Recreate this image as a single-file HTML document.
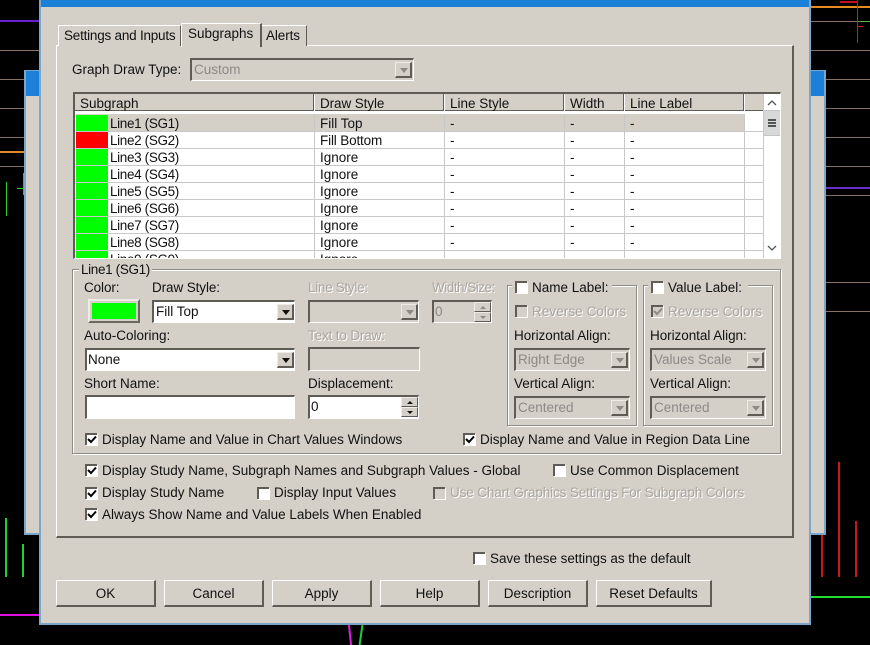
<!DOCTYPE html>
<html>
<head>
<meta charset="utf-8">
<style>
html,body{margin:0;padding:0;background:#000;}
#r{position:relative;width:870px;height:645px;overflow:hidden;background:#000;font-family:"Liberation Sans",sans-serif;font-size:13.5px;color:#111;}
#r div,#r span,#r svg{position:absolute;box-sizing:border-box;}
.t{line-height:16px;height:16px;white-space:nowrap;margin-top:1px;}
.n{letter-spacing:-.35px;}
.d{color:#aaa69e;text-shadow:1px 1px 0 #fff;}
.g{color:#8c8a86;}
.s{background:#d4d0c8;border-top:2px solid #5f5c56;border-left:2px solid #5f5c56;border-right:1px solid #fff;border-bottom:1px solid #fff;}
.w{background:#fff;}
.a{width:17px;height:16px;margin-top:1px;background:#d4d0c8;border-top:1px solid #eeece6;border-left:1px solid #eeece6;border-right:2px solid #5f5c56;border-bottom:2px solid #5f5c56;}
.a i{position:absolute;left:4px;top:5px;width:0;height:0;border-left:4px solid transparent;border-right:4px solid transparent;border-top:5px solid #111;}
.a.o i{border-top-color:#8c8a86;}
.sb{width:17px;height:10px;background:#d4d0c8;border-top:1px solid #eeece6;border-left:1px solid #eeece6;border-right:1px solid #5f5c56;border-bottom:1px solid #5f5c56;}
.sb i{position:absolute;left:5px;top:3px;width:0;height:0;border-left:3px solid transparent;border-right:3px solid transparent;}
.c{width:12px;height:12px;background:#fff;border-top:2px solid #5f5c56;border-left:2px solid #5f5c56;box-shadow:1px 1px 0 #fff;}
.c.o{background:#d4d0c8;}
.c svg{left:0;top:0;}
.b{top:580px;height:27px;background:#d4d0c8;border-top:1px solid #fff;border-left:1px solid #fff;border-right:2px solid #5f5c56;border-bottom:2px solid #5f5c56;text-align:center;line-height:26px;}
.l{background:#8a6f66;height:1px;}
.h{top:94px;width:1px;height:17px;background:#5f5c56;box-shadow:1px 0 0 #fff;}
.v{top:114px;width:1px;height:144px;background:#c8c8c8;}
.hl{left:76px;width:687px;height:1px;background:#c8c8c8;}
.sw{left:76px;width:32px;height:16px;background:#0f0;}
.gr{border:1px solid #8f8c84;box-shadow:1px 1px 0 #fff,inset 1px 1px 0 #fff;}
.tabt{border-top:1px solid #fff;border-left:1px solid #fff;border-right:1px solid #5f5c56;background:#d4d0c8;}
</style>
</head>
<body>
<div id="r">
<!-- chart -->
<div style="left:0;top:20px;width:40px;height:2px;background:#6a1fd0"></div>
<div class="l" style="left:0;top:50px;width:40px"></div>
<div class="l" style="left:0;top:79px;width:25px"></div>
<div class="l" style="left:0;top:108px;width:25px"></div>
<div class="l" style="left:0;top:137px;width:25px"></div>
<div style="left:0;top:151px;width:25px;height:2px;background:#e08a30"></div>
<div class="l" style="left:0;top:166px;width:25px"></div>
<div style="left:6px;top:182px;width:1px;height:34px;background:#28d028"></div>
<div style="left:23px;top:173px;width:1px;height:22px;background:#28d028"></div>
<div style="left:17px;top:188px;width:7px;height:1px;background:#28d028"></div>
<div style="left:5px;top:518px;width:2px;height:59px;background:#22d030"></div>
<div style="left:22px;top:544px;width:2px;height:33px;background:#22d030"></div>
<div style="left:0;top:614px;width:40px;height:2px;background:#e010e0"></div>
<div style="left:810px;top:6px;width:60px;height:2px;background:#e88a20"></div>
<div class="l" style="left:810px;top:21px;width:60px"></div>
<div style="left:860px;top:21px;width:10px;height:1px;background:#50c040"></div>
<div class="l" style="left:810px;top:50px;width:60px"></div>
<div class="l" style="left:825px;top:79px;width:45px"></div>
<div class="l" style="left:825px;top:108px;width:45px"></div>
<div class="l" style="left:825px;top:137px;width:45px"></div>
<div class="l" style="left:825px;top:166px;width:45px"></div>
<div style="left:825px;top:187px;width:45px;height:2px;background:#6a2fc8"></div>
<div class="l" style="left:825px;top:195px;width:45px"></div>
<div class="l" style="left:825px;top:282px;width:45px"></div>
<div class="l" style="left:825px;top:311px;width:45px"></div>
<div style="left:857px;top:0;width:1px;height:43px;background:#e01020"></div>
<div style="left:857px;top:26px;width:6px;height:1px;background:#e01020"></div>
<div style="left:840px;top:1px;width:18px;height:2px;background:#c01020"></div>
<div style="left:821px;top:534px;width:2px;height:43px;background:#c81818"></div>
<div style="left:838px;top:462px;width:2px;height:115px;background:#c81818"></div>
<div style="left:855px;top:521px;width:2px;height:56px;background:#c81818"></div>
<div style="left:810px;top:596px;width:60px;height:2px;background:#22e030"></div>
<div style="left:349px;top:625px;width:2px;height:20px;background:#e020e0;transform:rotate(-6deg)"></div>
<div style="left:360px;top:625px;width:2px;height:20px;background:#20d030;transform:rotate(8deg)"></div>
<!-- back window -->
<div style="left:24px;top:70px;width:802px;height:465px;background:#d4d0c8;border:2px solid #7ba6c9"></div>
<div style="left:26px;top:71px;width:798px;height:25px;background:#1c7fd8"></div>
<!-- main dialog -->
<div style="left:39px;top:-2px;width:772px;height:627px;background:#d4d0c8;border:2px solid #7ba6c9"></div>
<div style="left:41px;top:0;width:768px;height:7px;background:#1c7fd8"></div>
<!-- tab page -->
<div style="left:56px;top:45px;width:738px;height:493px;border-top:1px solid #fff;border-left:1px solid #fff;border-right:2px solid #5f5c56;border-bottom:2px solid #5f5c56"></div>
<div class="tabt" style="left:58px;top:25px;width:123px;height:21px"></div>
<div class="tabt" style="left:261px;top:25px;width:46px;height:21px"></div>
<div style="left:181px;top:23px;width:81px;height:24px;background:#d4d0c8;border-top:1px solid #fff;border-left:1px solid #fff;border-right:2px solid #5f5c56"></div>
<div class="t" style="left:64px;top:27px;letter-spacing:-.22px">Settings and Inputs</div>
<div class="t" style="left:188px;top:25px">Subgraphs</div>
<div class="t" style="left:266px;top:27px;letter-spacing:-.1px">Alerts</div>
<div class="t" style="left:72px;top:61px">Graph Draw Type:</div>
<div class="s" style="left:190px;top:58px;width:224px;height:23px"></div>
<div class="t g" style="left:194px;top:61px">Custom</div>
<div class="a o" style="left:395px;top:61px"><i></i></div>
<!-- table -->
<div style="left:73px;top:92px;width:708px;height:167px;background:#fff;border-top:2px solid #5f5c56;border-left:2px solid #5f5c56;border-right:1px solid #fff;border-bottom:1px solid #fff"></div>
<div style="left:75px;top:94px;width:688px;height:17px;background:#d4d0c8;border-bottom:1px solid #5f5c56"></div>
<div class="h" style="left:313px"></div><div class="h" style="left:443px"></div><div class="h" style="left:563px"></div><div class="h" style="left:623px"></div><div class="h" style="left:743px"></div>
<div class="t" style="left:80px;top:95px">Subgraph</div>
<div class="t" style="left:320px;top:95px;letter-spacing:-.1px">Draw Style</div>
<div class="t" style="left:450px;top:95px">Line Style</div>
<div class="t" style="left:570px;top:95px">Width</div>
<div class="t" style="left:630px;top:95px">Line Label</div>
<div style="left:76px;top:114px;width:669px;height:18px;background:#d4d0c8"></div>
<div class="hl" style="top:131px"></div><div class="hl" style="top:148px"></div><div class="hl" style="top:165px"></div><div class="hl" style="top:182px"></div><div class="hl" style="top:199px"></div><div class="hl" style="top:216px"></div><div class="hl" style="top:233px"></div><div class="hl" style="top:250px"></div>
<div class="v" style="left:314px"></div><div class="v" style="left:444px"></div><div class="v" style="left:564px"></div><div class="v" style="left:624px"></div><div class="v" style="left:744px"></div>
<div class="sw" style="top:115px"></div><div class="sw" style="top:132px;background:#f00"></div><div class="sw" style="top:149px"></div><div class="sw" style="top:166px"></div><div class="sw" style="top:183px"></div><div class="sw" style="top:200px"></div><div class="sw" style="top:217px"></div><div class="sw" style="top:234px"></div><div class="sw" style="top:251px;height:7px"></div>
<div class="t n" style="left:110px;top:115px">Line1 (SG1)</div><div class="t" style="left:320px;top:115px">Fill Top</div><div class="t" style="left:450px;top:115px">-</div><div class="t" style="left:570px;top:115px">-</div><div class="t" style="left:630px;top:115px">-</div>
<div class="t n" style="left:110px;top:132px">Line2 (SG2)</div><div class="t" style="left:320px;top:132px;letter-spacing:-.15px">Fill Bottom</div><div class="t" style="left:450px;top:132px">-</div><div class="t" style="left:570px;top:132px">-</div><div class="t" style="left:630px;top:132px">-</div>
<div class="t n" style="left:110px;top:149px">Line3 (SG3)</div><div class="t" style="left:320px;top:149px">Ignore</div><div class="t" style="left:450px;top:149px">-</div><div class="t" style="left:570px;top:149px">-</div><div class="t" style="left:630px;top:149px">-</div>
<div class="t n" style="left:110px;top:166px">Line4 (SG4)</div><div class="t" style="left:320px;top:166px">Ignore</div><div class="t" style="left:450px;top:166px">-</div><div class="t" style="left:570px;top:166px">-</div><div class="t" style="left:630px;top:166px">-</div>
<div class="t n" style="left:110px;top:183px">Line5 (SG5)</div><div class="t" style="left:320px;top:183px">Ignore</div><div class="t" style="left:450px;top:183px">-</div><div class="t" style="left:570px;top:183px">-</div><div class="t" style="left:630px;top:183px">-</div>
<div class="t n" style="left:110px;top:200px">Line6 (SG6)</div><div class="t" style="left:320px;top:200px">Ignore</div><div class="t" style="left:450px;top:200px">-</div><div class="t" style="left:570px;top:200px">-</div><div class="t" style="left:630px;top:200px">-</div>
<div class="t n" style="left:110px;top:217px">Line7 (SG7)</div><div class="t" style="left:320px;top:217px">Ignore</div><div class="t" style="left:450px;top:217px">-</div><div class="t" style="left:570px;top:217px">-</div><div class="t" style="left:630px;top:217px">-</div>
<div class="t n" style="left:110px;top:234px">Line8 (SG8)</div><div class="t" style="left:320px;top:234px">Ignore</div><div class="t" style="left:450px;top:234px">-</div><div class="t" style="left:570px;top:234px">-</div><div class="t" style="left:630px;top:234px">-</div>
<div style="left:75px;top:250px;width:688px;height:8px;overflow:hidden"><div class="t n" style="left:35px;top:1px">Line9 (SG9)</div><div class="t" style="left:245px;top:1px">Ignore</div></div>
<!-- scrollbar -->
<div style="left:763px;top:94px;width:17px;height:164px;background:#fff;border-left:1px solid #c8c8c8"></div>
<svg style="left:764px;top:96px" width="16" height="14"><path d="M4 9L8 5L12 9" fill="none" stroke="#555" stroke-width="1.3"/></svg>
<svg style="left:764px;top:241px" width="16" height="14"><path d="M4 5L8 9L12 5" fill="none" stroke="#555" stroke-width="1.3"/></svg>
<div style="left:764px;top:110px;width:16px;height:26px;background:#d8d8d8;border-top:1px solid #c4c4c4;border-bottom:1px solid #c4c4c4"></div>
<div style="left:768px;top:119px;width:8px;height:2px;background:#555"></div>
<div style="left:768px;top:122px;width:8px;height:2px;background:#555"></div>
<div style="left:768px;top:125px;width:8px;height:2px;background:#555"></div>
<!-- group Line1 -->
<div class="gr" style="left:72px;top:269px;width:709px;height:185px"></div>
<div class="t n" style="left:79px;top:261px;background:#d4d0c8;padding:0 2px">Line1 (SG1)</div>
<div class="t" style="left:84px;top:279px;letter-spacing:-.1px">Color:</div>
<div style="left:88px;top:299px;width:52px;height:24px;background:#d4d0c8;border-top:2px solid #eeece6;border-left:2px solid #eeece6;border-right:2px solid #6a675f;border-bottom:2px solid #6a675f"></div>
<div style="left:92px;top:303px;width:44px;height:16px;background:#0f0"></div>
<div class="t" style="left:152px;top:279px;letter-spacing:-.1px">Draw Style:</div>
<div class="s w" style="left:152px;top:300px;width:143px;height:23px"></div>
<div class="t" style="left:156px;top:303px">Fill Top</div>
<div class="a" style="left:277px;top:303px"><i></i></div>
<div class="t" style="left:84px;top:327px">Auto-Coloring:</div>
<div class="s w" style="left:85px;top:348px;width:210px;height:23px"></div>
<div class="t" style="left:88px;top:351px">None</div>
<div class="a" style="left:277px;top:351px"><i></i></div>
<div class="t" style="left:84px;top:375px">Short Name:</div>
<div class="s w" style="left:85px;top:395px;width:210px;height:24px"></div>
<div class="t d" style="left:308px;top:279px;letter-spacing:-.3px">Line Style:</div>
<div class="s" style="left:308px;top:300px;width:111px;height:23px"></div>
<div class="a o" style="left:401px;top:303px"><i></i></div>
<div class="t d" style="left:432px;top:279px;letter-spacing:-.5px">Width/Size:</div>
<div class="s" style="left:432px;top:300px;width:60px;height:23px"></div>
<div class="t g" style="left:435px;top:303px">0</div>
<div class="sb" style="left:474px;top:302px"><i style="border-bottom:3px solid #8c8a86"></i></div>
<div class="sb" style="left:474px;top:312px"><i style="border-top:3px solid #8c8a86"></i></div>
<div class="t d" style="left:308px;top:327px;letter-spacing:-.15px">Text to Draw:</div>
<div class="s" style="left:308px;top:347px;width:112px;height:24px"></div>
<div class="t" style="left:308px;top:375px">Displacement:</div>
<div class="s w" style="left:308px;top:395px;width:111px;height:24px"></div>
<div class="t" style="left:311px;top:398px">0</div>
<div class="sb" style="left:401px;top:397px"><i style="border-bottom:3px solid #111"></i></div>
<div class="sb" style="left:401px;top:407px"><i style="border-top:3px solid #111"></i></div>
<div class="c" style="left:85px;top:433px"><svg width="10" height="10"><path d="M1 4L4 7L9 1.5" fill="none" stroke="#000" stroke-width="2"/></svg></div>
<div class="t" style="left:102px;top:431px;letter-spacing:-.02px">Display Name and Value in Chart Values Windows</div>
<div class="c" style="left:463px;top:433px"><svg width="10" height="10"><path d="M1 4L4 7L9 1.5" fill="none" stroke="#000" stroke-width="2"/></svg></div>
<div class="t" style="left:480px;top:431px">Display Name and Value in Region Data Line</div>
<!-- name label group -->
<div class="gr" style="left:507px;top:285px;width:130px;height:141px"></div>
<div style="left:512px;top:278px;width:100px;height:16px;background:#d4d0c8"></div>
<div class="c" style="left:515px;top:281px"></div>
<div class="t" style="left:532px;top:279px">Name Label:</div>
<div class="c o" style="left:515px;top:305px"></div>
<div class="t d" style="left:532px;top:303px;letter-spacing:.07px">Reverse Colors</div>
<div class="t" style="left:514px;top:327px;letter-spacing:-.05px">Horizontal Align:</div>
<div class="s" style="left:514px;top:348px;width:116px;height:23px"></div>
<div class="t g" style="left:518px;top:351px">Right Edge</div>
<div class="a o" style="left:611px;top:351px"><i></i></div>
<div class="t" style="left:514px;top:375px">Vertical Align:</div>
<div class="s" style="left:514px;top:396px;width:116px;height:23px"></div>
<div class="t g" style="left:518px;top:399px">Centered</div>
<div class="a o" style="left:611px;top:399px"><i></i></div>
<!-- value label group -->
<div class="gr" style="left:643px;top:285px;width:130px;height:141px"></div>
<div style="left:648px;top:278px;width:100px;height:16px;background:#d4d0c8"></div>
<div class="c" style="left:651px;top:281px"></div>
<div class="t" style="left:668px;top:279px">Value Label:</div>
<div class="c o" style="left:651px;top:305px"><svg width="10" height="10"><path d="M1 4L4 7L9 1.5" fill="none" stroke="#8c8a86" stroke-width="2"/></svg></div>
<div class="t d" style="left:668px;top:303px;letter-spacing:.07px">Reverse Colors</div>
<div class="t" style="left:650px;top:327px;letter-spacing:-.05px">Horizontal Align:</div>
<div class="s" style="left:650px;top:348px;width:116px;height:23px"></div>
<div class="t g" style="left:654px;top:351px">Values Scale</div>
<div class="a o" style="left:747px;top:351px"><i></i></div>
<div class="t" style="left:650px;top:375px">Vertical Align:</div>
<div class="s" style="left:650px;top:396px;width:116px;height:23px"></div>
<div class="t g" style="left:654px;top:399px">Centered</div>
<div class="a o" style="left:747px;top:399px"><i></i></div>
<!-- global options -->
<div class="c" style="left:85px;top:464px"><svg width="10" height="10"><path d="M1 4L4 7L9 1.5" fill="none" stroke="#000" stroke-width="2"/></svg></div>
<div class="t" style="left:102px;top:462px">Display Study Name, Subgraph Names and Subgraph Values - Global</div>
<div class="c" style="left:553px;top:464px"></div>
<div class="t" style="left:570px;top:462px;letter-spacing:.04px">Use Common Displacement</div>
<div class="c" style="left:85px;top:487px"><svg width="10" height="10"><path d="M1 4L4 7L9 1.5" fill="none" stroke="#000" stroke-width="2"/></svg></div>
<div class="t" style="left:102px;top:484px">Display Study Name</div>
<div class="c" style="left:257px;top:487px"></div>
<div class="t" style="left:274px;top:484px">Display Input Values</div>
<div class="c o" style="left:433px;top:487px"></div>
<div class="t d" style="left:450px;top:484px;letter-spacing:-.13px">Use Chart Graphics Settings For Subgraph Colors</div>
<div class="c" style="left:85px;top:508px"><svg width="10" height="10"><path d="M1 4L4 7L9 1.5" fill="none" stroke="#000" stroke-width="2"/></svg></div>
<div class="t" style="left:102px;top:506px">Always Show Name and Value Labels When Enabled</div>
<div class="c" style="left:473px;top:552px"></div>
<div class="t" style="left:490px;top:550px;letter-spacing:-.06px">Save these settings as the default</div>
<!-- buttons -->
<div class="b" style="left:56px;width:100px">OK</div>
<div class="b" style="left:164px;width:100px">Cancel</div>
<div class="b" style="left:272px;width:100px">Apply</div>
<div class="b" style="left:380px;width:100px">Help</div>
<div class="b" style="left:488px;width:100px">Description</div>
<div class="b" style="left:596px;width:116px">Reset Defaults</div>
</div>
</body>
</html>
